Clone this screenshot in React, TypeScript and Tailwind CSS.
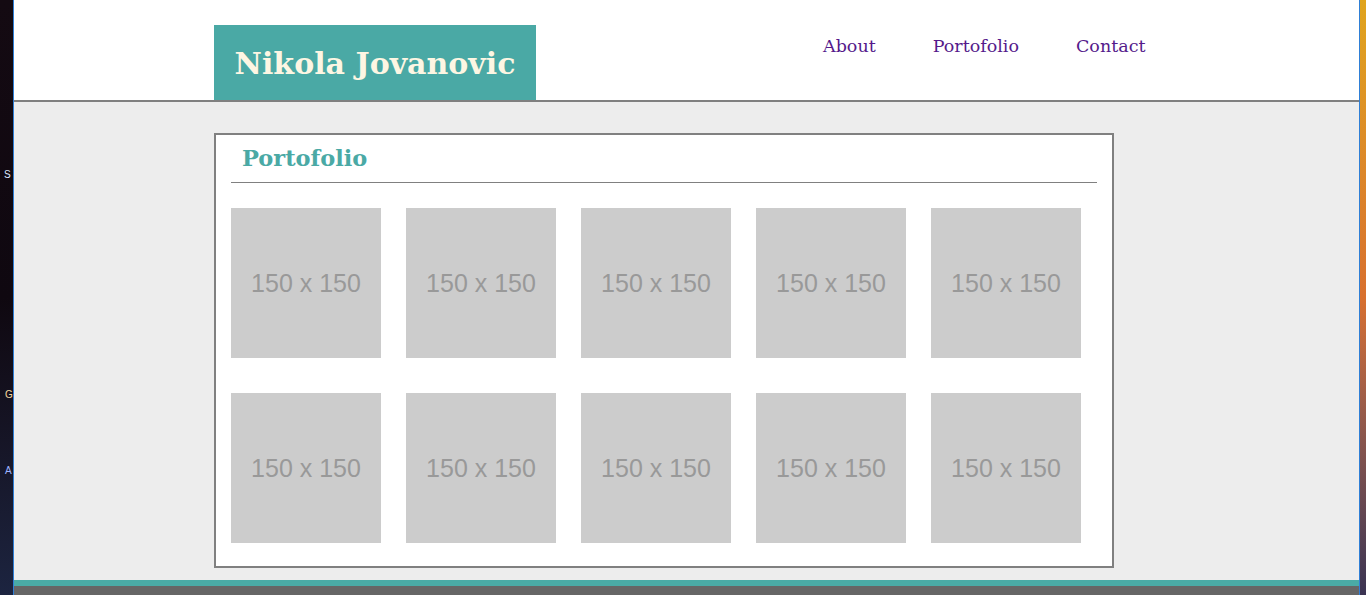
import React from 'react';

const tiles = Array.from({ length: 10 }, (_, i) => i);

function Placeholder() {
  return (
    <div className="w-[150px] h-[150px] bg-[#cccccc] flex items-center justify-center">
      <span className="text-[25px] text-[#999999] font-['Liberation_Sans',Arial,sans-serif] leading-none">150 x 150</span>
    </div>
  );
}

export default function App() {
  return (
    <div className="flex w-[1366px] h-[595px] overflow-hidden">
      {/* desktop peeking on the left */}
      <div className="w-[13px] shrink-0 bg-gradient-to-b from-[#140a12] via-[#0f0810] to-[#1c2440] flex flex-col text-[10px] leading-none text-[#dfe8ff] font-['Liberation_Sans',sans-serif] overflow-hidden">
        <span className="mt-[170px] ml-[4px]">S</span>
        <span className="mt-[210px] ml-[5px] text-[#f4d9a0]">G</span>
        <span className="mt-[66px] ml-[5px] text-[#9fb4ff]">A</span>
      </div>
      <div className="w-px shrink-0 bg-[#2f7fd6]" />

      {/* browser page */}
      <div className="flex-1 flex flex-col bg-[#ededed]">
        <header className="h-[102px] shrink-0 bg-white border-b-2 border-[#808080] flex">
          <div className="ml-[200px] w-[322px] h-[75px] mt-[25px] bg-[#4aa9a5] flex items-center justify-center">
            <h1 className="font-['DejaVu_Serif',Georgia,serif] font-bold text-[30px] text-[#fdf6e3] mt-[2px]">Nikola Jovanovic</h1>
          </div>
          <nav className="ml-[287px] mt-[34px] flex gap-[57px] h-[24px] items-center font-['DejaVu_Serif',Georgia,serif] text-[17.5px] text-[#551a8b]">
            <span>About</span>
            <span>Portofolio</span>
            <span>Contact</span>
          </nav>
        </header>

        <main className="flex-1 pt-[31px]">
          <section className="ml-[200px] w-[900px] h-[435px] border-2 border-[#808080] bg-white px-[15px]">
            <div className="h-[48px] border-b border-[#808080] flex items-center pl-[11px]">
              <h2 className="font-['DejaVu_Serif',Georgia,serif] font-bold text-[22.5px] text-[#4aa9a5]">Portofolio</h2>
            </div>
            <div className="mt-[25px] grid grid-cols-[repeat(5,150px)] gap-x-[25px] gap-y-[35px]">
              {tiles.map((t) => (
                <Placeholder key={t} />
              ))}
            </div>
          </section>
        </main>

        <div className="h-[6px] shrink-0 bg-[#4aaba6]" />
        <div className="h-[9px] shrink-0 bg-[#666666]" />
      </div>

      {/* desktop peeking on the right */}
      <div className="w-px shrink-0 bg-[#2f7fd6]" />
      <div className="w-[6px] shrink-0 bg-gradient-to-b from-[#e0a41c] via-[#d8702e] to-[#3a3352]" />
    </div>
  );
}
